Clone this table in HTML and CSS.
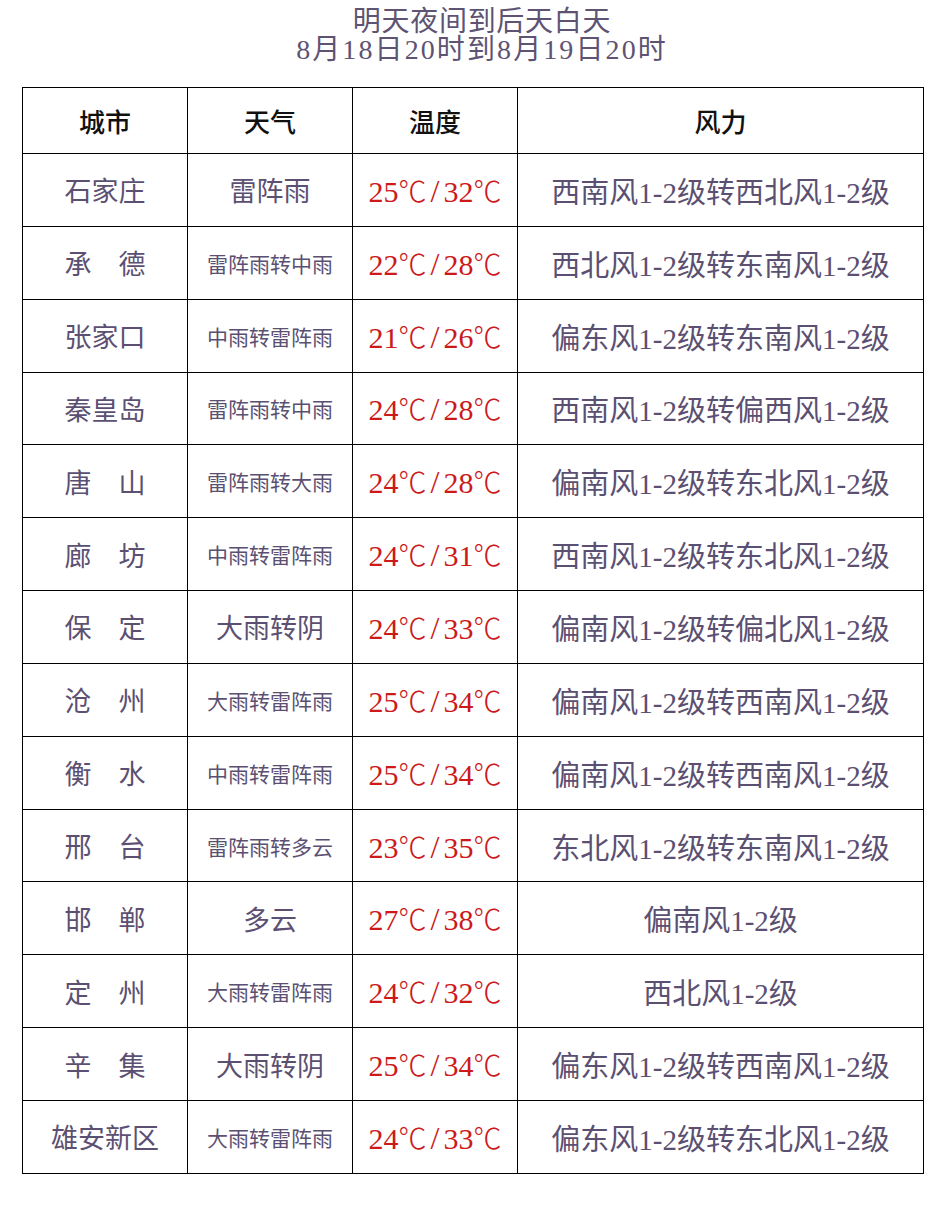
FILE: index.html
```html
<!DOCTYPE html>
<html lang="zh-CN">
<head>
<meta charset="utf-8">
<title>明天夜间到后天白天</title>
<link rel="stylesheet" href="styles.css">
</head>
<body>
<div class="page">
  <div class="title">
    <div class="title-line first">明天夜间到后天白天</div>
    <div class="title-line second">8月18日20时到8月19日20时</div>
  </div>
  <table class="forecast">
    <colgroup>
      <col class="c-city"><col class="c-weather"><col class="c-temp"><col class="c-wind">
    </colgroup>
    <thead>
      <tr class="head-row"><th>城市</th><th>天气</th><th>温度</th><th>风力</th></tr>
    </thead>
    <tbody>
      <tr><td class="city">石家庄</td><td class="wx">雷阵雨</td><td class="temp">25<span class="u">℃</span><span class="sl">/</span>32<span class="u">℃</span></td><td class="wind">西南风1-2级转西北风1-2级</td></tr>
      <tr><td class="city">承　德</td><td class="wx small">雷阵雨转中雨</td><td class="temp">22<span class="u">℃</span><span class="sl">/</span>28<span class="u">℃</span></td><td class="wind">西北风1-2级转东南风1-2级</td></tr>
      <tr><td class="city">张家口</td><td class="wx small">中雨转雷阵雨</td><td class="temp">21<span class="u">℃</span><span class="sl">/</span>26<span class="u">℃</span></td><td class="wind">偏东风1-2级转东南风1-2级</td></tr>
      <tr><td class="city">秦皇岛</td><td class="wx small">雷阵雨转中雨</td><td class="temp">24<span class="u">℃</span><span class="sl">/</span>28<span class="u">℃</span></td><td class="wind">西南风1-2级转偏西风1-2级</td></tr>
      <tr><td class="city">唐　山</td><td class="wx small">雷阵雨转大雨</td><td class="temp">24<span class="u">℃</span><span class="sl">/</span>28<span class="u">℃</span></td><td class="wind">偏南风1-2级转东北风1-2级</td></tr>
      <tr><td class="city">廊　坊</td><td class="wx small">中雨转雷阵雨</td><td class="temp">24<span class="u">℃</span><span class="sl">/</span>31<span class="u">℃</span></td><td class="wind">西南风1-2级转东北风1-2级</td></tr>
      <tr><td class="city">保　定</td><td class="wx">大雨转阴</td><td class="temp">24<span class="u">℃</span><span class="sl">/</span>33<span class="u">℃</span></td><td class="wind">偏南风1-2级转偏北风1-2级</td></tr>
      <tr><td class="city">沧　州</td><td class="wx small">大雨转雷阵雨</td><td class="temp">25<span class="u">℃</span><span class="sl">/</span>34<span class="u">℃</span></td><td class="wind">偏南风1-2级转西南风1-2级</td></tr>
      <tr><td class="city">衡　水</td><td class="wx small">中雨转雷阵雨</td><td class="temp">25<span class="u">℃</span><span class="sl">/</span>34<span class="u">℃</span></td><td class="wind">偏南风1-2级转西南风1-2级</td></tr>
      <tr><td class="city">邢　台</td><td class="wx small">雷阵雨转多云</td><td class="temp">23<span class="u">℃</span><span class="sl">/</span>35<span class="u">℃</span></td><td class="wind">东北风1-2级转东南风1-2级</td></tr>
      <tr><td class="city">邯　郸</td><td class="wx">多云</td><td class="temp">27<span class="u">℃</span><span class="sl">/</span>38<span class="u">℃</span></td><td class="wind">偏南风1-2级</td></tr>
      <tr><td class="city">定　州</td><td class="wx small">大雨转雷阵雨</td><td class="temp">24<span class="u">℃</span><span class="sl">/</span>32<span class="u">℃</span></td><td class="wind">西北风1-2级</td></tr>
      <tr><td class="city">辛　集</td><td class="wx">大雨转阴</td><td class="temp">25<span class="u">℃</span><span class="sl">/</span>34<span class="u">℃</span></td><td class="wind">偏东风1-2级转西南风1-2级</td></tr>
      <tr><td class="city">雄安新区</td><td class="wx small">大雨转雷阵雨</td><td class="temp">24<span class="u">℃</span><span class="sl">/</span>33<span class="u">℃</span></td><td class="wind">偏东风1-2级转东北风1-2级</td></tr>
    </tbody>
  </table>
</div>
</body>
</html>
```
FILE: styles.css
```css
html, body {
  margin: 0;
  padding: 0;
  background: #ffffff;
}
body {
  font-family: "Liberation Serif", "Noto Sans CJK SC", serif;
  color: #5b5072;
}
.page {
  width: 942px;
  padding: 8px 0 0 22px;
  box-sizing: border-box;
}
.title {
  width: 900px;
  padding-left: 20px;
  box-sizing: border-box;
  text-align: center;
  font-size: 28px;
  line-height: 28px;
  color: #5e5373;
  margin-bottom: 23px;
}
.title-line {
  height: 28px;
  white-space: nowrap;
}
.title-line.first { letter-spacing: 0.7px; }
.title-line.second { letter-spacing: 2.1px; }
.forecast {
  width: 901px;
  border-collapse: collapse;
  table-layout: fixed;
}
.c-city, .c-weather, .c-temp { width: 165px; }
.c-wind { width: 406px; }
.forecast th, .forecast td {
  border: 1.5px solid #000;
  text-align: center;
  vertical-align: middle;
  padding: 0;
  white-space: nowrap;
}
.head-row { height: 66px; }
.forecast th {
  font-size: 26px;
  font-weight: 500;
  color: #111;
}
.forecast tbody tr { height: 72.85px; }
.city { font-size: 27px; }
.wx { font-size: 27px; }
.wx.small { font-size: 21px; }
.temp {
  font-size: 30px;
  color: #cc1a1a;
}
.temp .u {
  font-family: "Noto Sans CJK SC", sans-serif;
  font-weight: 300;
  font-size: 28px;
}
.temp .sl {
  margin: 0 4px;
  font-size: 32px;
}
.wind {
  font-size: 29px;
}
```
